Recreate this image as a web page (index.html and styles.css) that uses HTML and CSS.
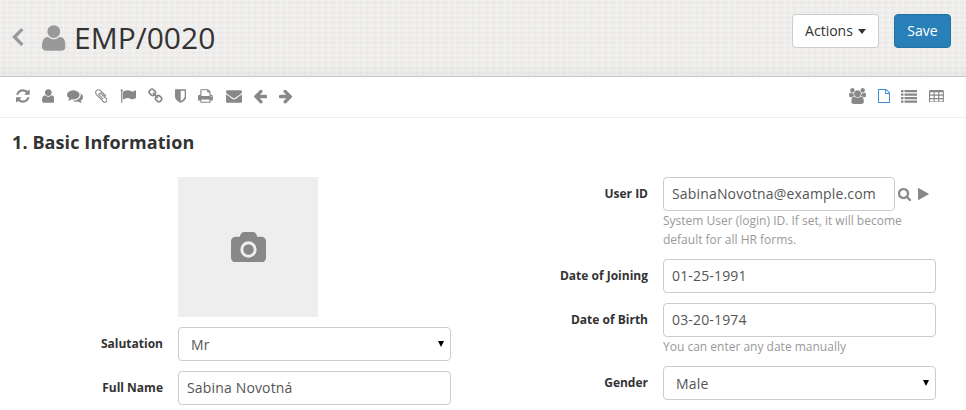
FILE: index.html
```html
<!DOCTYPE html>
<html lang="en">
<head>
<meta charset="utf-8">
<title>EMP/0020</title>
<link rel="stylesheet" href="styles.css">
</head>
<body>
<svg class="defs" width="0" height="0">
  <symbol id="user" viewBox="0 0 1408 1792"><path transform="matrix(1 0 0 -1 0 1536)" d="M1408 131q0 -120 -73 -189.500t-194 -69.500h-874q-121 0 -194 69.500t-73 189.500q0 53 3.500 103.500t14 109t26.500 108.500t43 97.500t62 81t85.500 53.500t111.500 20q9 0 42 -21.500t74.500 -48t108 -48t133.500 -21.500t133.500 21.500t108 48t74.500 48t42 21.500q61 0 111.500 -20t85.500 -53.500t62 -81t43 -97.500t26.500 -108.500t14 -109t3.500 -103.500zM1088 1024q0 -159 -112.500 -271.500t-271.500 -112.500t-271.500 112.500t-112.500 271.500t112.500 271.500t271.500 112.500t271.500 -112.500t112.500 -271.500z"/></symbol>
</svg>
<header class="head">
  <svg class="back" viewBox="0 0 12 18"><path d="M10.300 1.200 2.500 9l7.800 7.800"/></svg>
  <svg class="head-user"><use href="#user"/></svg>
  <h1>EMP/0020</h1>
  <button class="btn">Actions<i class="caret"></i></button>
  <button class="btn primary">Save</button>
</header>
<nav class="toolbar">
  <div class="group">
    <svg width="13.700" height="16" viewBox="128 0 1536 1792"><path d="M1639 1056q0 5-1 7-64 268-268 434.500t-478 166.500q-146 0-282.500-55t-243.500-157l-129 129q-19 19-45 19t-45-19-19-45v-448q0-26 19-45t45-19h448q26 0 45 19t19 45-19 45l-137 137q71 66 161 102t187 36q134 0 250-65t186-179q11-17 53-117 8-23 30-23h192q13 0 22.500 9.500t9.500 22.500zm25-800v448q0 26-19 45t-45 19h-448q-26 0-45-19t-19-45 19-45l138-138q-148-137-349-137-134 0-250 65t-186 179q-11 17-53 117-8 23-30 23h-199q-13 0-22.500-9.500t-9.500-22.500v-7q65-268 270-434.500t480-166.500q146 0 284 55.500t245 156.500l130-129q19-19 45-19t45 19 19 45z"/></svg>
    <svg width="12.600" height="16"><use href="#user"/></svg>
    <svg width="16" height="16" viewBox="0 0 1792 1792"><path d="M1408 768q0 139-94 257t-256.500 186.500-353.500 68.500q-86 0-176-16-124 88-278 128-36 9-86 16h-3q-11 0-20.500-8t-11.500-21q-1-3-1-6.500t.5-6.500 2-6l2.500-5 3.500-5.500 4-5 4.500-5 4-4.500q5-6 23-25t26-29.500 22.500-29 25-38.500 20.500-44q-124-72-195-177t-71-224q0-139 94-257t256.500-186.500 353.500-68.500 353.500 68.500 256.500 186.500 94 257zm384 256q0 120-71 224.500t-195 176.500q10 24 20.500 44t25 38.500 22.500 29 26 29.500 23 25q1 1 4 4.500t4.500 5 4 5 3.500 5.500l2.500 5 2 6 .5 6.500-1 6.500q-3 14-13 22t-22 7q-50-7-86-16-154-40-278-128-90 16-176 16-271 0-472-132 58 4 88 4 161 0 309-45t264-129q125-92 192-212t67-254q0-77-23-152 129 71 204 178t75 230z"/></svg>
    <svg width="12.600" height="16" viewBox="192 0 1408 1792"><path d="M1596 1385q0 117-79 196t-196 79q-135 0-235-100l-777-776q-113-115-113-271 0-159 110-270t269-111q158 0 273 113l605 606q10 10 10 22 0 16-30.500 46.500t-46.500 30.500q-13 0-23-10l-606-607q-79-77-181-77-106 0-179 75t-73 181q0 105 76 181l776 777q63 63 145 63 64 0 106-42t42-106q0-82-63-145l-581-581q-26-24-60-24-29 0-48 19t-19 48q0 32 25 59l410 410q10 10 10 22 0 16-31 47t-47 31q-12 0-22-10l-410-410q-63-61-63-149 0-82 57-139t139-57q88 0 149 63l581 581q100 98 100 235z"/></svg>
    <svg width="16" height="16" viewBox="0 0 1792 1792"><path d="M320 256q0 72-64 110v1266q0 13-9.500 22.500t-22.500 9.500h-64q-13 0-22.500-9.500t-9.500-22.500v-1266q-64-38-64-110 0-53 37.500-90.500t90.500-37.500 90.500 37.500 37.500 90.500zm1472 64v763q0 25-12.500 38.500t-39.500 27.500q-215 116-369 116-61 0-123.500-22t-108.500-48-115.500-48-142.500-22q-192 0-464 146-17 9-33 9-26 0-45-19t-19-45v-742q0-32 31-55 21-14 79-43 236-120 421-120 107 0 200 29t219 88q38 19 88 19 54 0 117.500-21t110-47 88-47 54.500-21q26 0 45 19t19 45z"/></svg>
    <svg width="14.900" height="16" viewBox="64 0 1664 1792"><path d="M1520 1216q0-40-28-68l-208-208q-28-28-68-28-42 0-72 32 3 3 19 18.500t21.500 21.500 15 19 13 25.500 3.500 27.500q0 40-28 68t-68 28q-15 0-27.500-3.500t-25.500-13-19-15-21.500-21.500-18.500-19q-33 31-33 73 0 40 28 68l206 207q27 27 68 27 40 0 68-26l147-146q28-28 28-67zm-703-705q0-40-28-68l-206-207q-28-28-68-28-39 0-68 27l-147 146q-28 28-28 67 0 40 28 68l208 208q27 27 68 27 42 0 72-31-3-3-19-18.500t-21.500-21.500-15-19-13-25.500-3.500-27.500q0-40 28-68t68-28q15 0 27.500 3.500t25.500 13 19 15 21.500 21.500 18.500 19q33-31 33-73zm895 705q0 120-85 203l-147 146q-83 83-203 83-121 0-204-85l-206-207q-83-83-83-203 0-123 88-209l-88-88q-86 88-208 88-120 0-204-84l-208-208q-84-84-84-204t85-203l147-146q83-83 203-83 121 0 204 85l206 207q83 83 83 203 0 123-88 209l88 88q86-88 208-88 120 0 204 84l208 208q84 84 84 204z"/></svg>
    <svg width="11.400" height="16" viewBox="256 0 1280 1792"><path d="M1344 960v-640h-448v1137q119-63 213-137 235-184 235-360zm192-768v768q0 86-33.500 170.500t-83 150-118 127.500-126.500 103-121 77.500-89.500 49.500-42.500 20q-12 6-26 6t-26-6q-16-7-42.500-20t-89.500-49.500-121-77.500-126.500-103-118-127.500-83-150-33.500-170.500v-768q0-26 19-45t45-19h1152q26 0 45 19t19 45z"/></svg>
    <svg width="14.900" height="16" viewBox="64 0 1664 1792"><path d="M448 1536h896v-256h-896v256zm0-640h896v-384h-160q-40 0-68-28t-28-68v-160h-640v640zm1152 64q0-26-19-45t-45-19-45 19-19 45 19 45 45 19 45-19 19-45zm128 0v416q0 13-9.500 22.500t-22.500 9.500h-224v160q0 40-28 68t-68 28h-960q-40 0-68-28t-28-68v-160h-224q-13 0-22.500-9.500t-9.500-22.500v-416q0-79 56.500-135.500t135.500-56.500h64v-544q0-40 28-68t68-28h672q40 0 88 20t76 48l152 152q28 28 48 76t20 88v256h64q79 0 135.500 56.500t56.500 135.500z"/></svg>
    <svg width="16" height="16" viewBox="0 0 1792 1792"><path d="M1792 710v794q0 66-47 113t-113 47h-1472q-66 0-113-47t-47-113v-794q44 49 101 87 362 246 497 345 57 42 92.500 65.500t94.500 48 110 24.500h2q51 0 110-24.500t94.500-48 92.500-65.500q170-123 498-345 57-39 100-87zm0-294q0 79-49 151t-122 123q-376 261-468 325-10 7-42.500 30.500t-54 38-52 32.500-57.500 27-50 9h-2q-23 0-50-9t-57.500-27-52-32.500-54-38-42.500-30.500q-91-64-262-182.500t-205-142.500q-62-42-117-115.500t-55-136.500q0-78 41.500-130t118.500-52h1472q65 0 112.500 47t47.500 113z"/></svg>
    <svg width="13.100" height="16" viewBox="192 0 1472 1792"><path d="M1664 896v128q0 53-32.500 90.500t-84.500 37.500h-704l293 294q38 36 38 90t-38 90l-75 76q-37 37-90 37-52 0-91-37l-651-652q-37-37-37-90 0-52 37-91l651-650q38-38 91-38 52 0 90 38l75 74q38 38 38 91t-38 91l-293 293h704q52 0 84.500 37.500t32.500 90.500z"/></svg>
    <svg width="13.100" height="16" viewBox="128 0 1472 1792"><path d="M1600 960q0 54-37 91l-651 651q-39 37-91 37-51 0-90-37l-75-75q-38-38-38-91t38-91l293-293h-704q-52 0-84.500-37.500t-32.500-90.500v-128q0-53 32.500-90.500t84.500-37.500h704l-293-294q-38-36-38-90t38-90l75-75q38-38 90-38 53 0 91 38l651 651q37 35 37 90z"/></svg>
  </div>
  <div class="group views">
    <svg width="17.100" height="16" viewBox="64 0 1920 1792"><path d="M657 896q-162 5-265 128h-134q-82 0-138-40.500t-56-118.500q0-353 124-353 6 0 43.500 21t97.500 42.500 119 21.500q67 0 133-23-5 37-5 66 0 139 81 256zm1071 637q0 120-73 189.500t-194 69.500h-874q-121 0-194-69.500t-73-189.500q0-53 3.500-103.500t14-109 26.500-108.500 43-97.500 62-81 85.500-53.500 111.500-20q10 0 43 21.500t73 48 107 48 135 21.500 135-21.500 107-48 73-48 43-21.500q61 0 111.500 20t85.500 53.500 62 81 43 97.500 26.500 108.500 14 109 3.500 103.500zm-1024-1277q0 106-75 181t-181 75-181-75-75-181 75-181 181-75 181 75 75 181zm704 384q0 159-112.500 271.500t-271.500 112.500-271.500-112.500-112.500-271.500 112.500-271.500 271.500-112.500 271.500 112.500 112.500 271.500zm576 225q0 78-56 118.500t-138 40.500h-134q-103-123-265-128 81-117 81-256 0-29-5-66 66 23 133 23 59 0 119-21.500t97.500-42.500 43.500-21q124 0 124 353zm-128-609q0 106-75 181t-181 75-181-75-75-181 75-181 181-75 181 75 75 181z"/></svg>
    <svg class="current" width="12" height="14" viewBox="128 0 1536 1792"><path d="M1596 380q28 28 48 76t20 88v1152q0 40-28 68t-68 28h-1344q-40 0-68-28t-28-68v-1600q0-40 28-68t68-28h896q40 0 88 20t76 48zm-444-244v376h376q-10-29-22-41l-313-313q-12-12-41-22zm384 1528v-1024h-416q-40 0-68-28t-28-68v-416h-768v1536h1280z"/></svg>
    <svg width="16" height="13" viewBox="0 0 16 13"><path d="M0 0h2.500v2.200H0zM3.500 0H16v2.200H3.500zM0 3.500h2.500v2.200H0zM3.500 3.500H16v2.200H3.500zM0 7h2.500v2.200H0zM3.500 7H16v2.200H3.500zM0 10.500h2.500v2.200H0zM3.500 10.500H16v2.200H3.500z"/></svg>
    <svg width="14.900" height="12.600" viewBox="64 128 1664 1408"><path fill-rule="evenodd" d="M224 128h1344q160 0 160 160v1088q0 160-160 160H224q-160 0-160-160V288q0-160 160-160zM192 384v256h384V384zm512 0v256h384V384zm512 0v256h384V384zM192 768v256h384V768zm512 0v256h384V768zm512 0v256h384V768zM192 1152v256h384v-256zm512 0v256h384v-256zm512 0v256h384v-256z"/></svg>
  </div>
</nav>
<main>
  <h2>1. Basic Information</h2>
  <form class="form">
    <div class="col">
      <div class="photo"><svg width="35" height="30.300" viewBox="0 128 1920 1664"><path transform="translate(0 128)" d="M960 672q119 0 203.500 84.500t84.500 203.500-84.500 203.500-203.500 84.500-203.500-84.500-84.500-203.500 84.500-203.500 203.500-84.500zm704-416q106 0 181 75t75 181v896q0 106-75 181t-181 75h-1408q-106 0-181-75t-75-181v-896q0-106 75-181t181-75h224l51-136q19-49 69.500-84.500t103.500-35.500h512q53 0 103.500 35.500t69.500 84.500l51 136h224zm-704 1152q185 0 316.500-131.500t131.500-316.500-131.500-316.500-316.500-131.500-316.500 131.500-131.500 316.500 131.500 316.500 316.500 131.500z"/></svg></div>
      <div class="row"><label>Salutation</label><div class="field select"><span>Mr</span><i class="arrow"></i></div></div>
      <div class="row"><label>Full Name</label><div class="field">Sabina Novotná</div></div>
    </div>
    <div class="col">
      <div class="row"><label>User ID</label>
        <div class="control">
          <div class="link-field">
            <div class="field">SabinaNovotna@example.com</div>
            <svg class="search" width="13" height="13" viewBox="64 128 1664 1664"><path d="M1216 832q0-185-131.500-316.500t-316.500-131.500-316.500 131.500-131.500 316.500 131.500 316.500 316.500 131.500 316.500-131.500 131.500-316.500zm512 832q0 52-38 90t-90 38q-54 0-90-38l-343-342q-179 124-399 124-143 0-273.500-55.500t-225-150-150-225-55.500-273.500 55.500-273.500 150-225 225-150 273.500-55.500 273.500 55.500 225 150 150 225 55.500 273.500q0 220-124 399l343 343q37 37 37 90z"/></svg>
            <svg class="open" width="11" height="12" viewBox="0 0 11 12"><path d="M0 .3Q0-.2.500.1L10.700 5.700Q11 6 10.700 6.300L.5 11.900Q0 12.200 0 11.700z"/></svg>
          </div>
          <p class="help">System User (login) ID. If set, it will become default for all HR forms.</p>
        </div>
      </div>
      <div class="row"><label>Date of Joining</label><div class="field">01-25-1991</div></div>
      <div class="row"><label>Date of Birth</label>
        <div class="control"><div class="field">03-20-1974</div><p class="help">You can enter any date manually</p></div>
      </div>
      <div class="row"><label>Gender</label><div class="field select"><span>Male</span><i class="arrow"></i></div></div>
    </div>
  </form>
</main>
</body>
</html>
```
FILE: styles.css
```css
* { box-sizing: border-box; }
html, body { height: 410px; overflow: hidden; }
body {
  margin: 0;
  background: #fff;
  color: #333;
  font: 14px/20px "Open Sans", "Noto Sans", sans-serif;
}
h1, h2, p { margin: 0; }
svg { display: block; flex: none; fill: #888; }
.defs { position: absolute; }

.head {
  display: flex;
  align-items: flex-start;
  height: 77px;
  padding: 0 15px 0 12px;
  border-bottom: 1px solid #c7c7c7;
  background:
    linear-gradient(to bottom, rgba(0,0,0,0) 85%, rgba(0,0,0,.03)),
    repeating-linear-gradient(90deg, rgba(255,255,255,.22) 0 1px, transparent 1px 3px, rgba(0,0,0,.012) 3px 4px, transparent 4px 7px),
    repeating-linear-gradient(0deg, rgba(255,255,255,.22) 0 1px, transparent 1px 3px, rgba(0,0,0,.012) 3px 4px, transparent 4px 5px),
    #eeedec;
}
.back { width: 12px; height: 18px; margin-top: 28px; fill: none; stroke: #999; stroke-width: 3.300; }
.head-user { width: 23.600px; height: 30px; margin: 23px 8.400px 0 18px; fill: #999; }
h1 { flex: 1; margin-top: 18px; font-size: 30px; line-height: 40px; font-weight: 400; }
.btn {
  display: flex;
  align-items: center;
  justify-content: center;
  width: 87px;
  height: 34px;
  margin-top: 14px;
  padding: 0;
  border: 1px solid #ccc;
  border-radius: 4px;
  background: #fff;
  color: #333;
  font: inherit;
}
.btn.primary { width: 57px; margin-left: 15px; border-color: #2472a4; background: #2980b9; color: #fff; }
.caret { margin-left: 5px; border: 4px solid transparent; border-top: 5px solid #333; border-bottom: 0; }

.toolbar {
  display: flex;
  justify-content: space-between;
  height: 41px;
  padding: 0 22px 0 16px;
  border-bottom: 1px solid #eee;
}
.group { display: flex; align-items: center; gap: 12.200px; height: 38px; }
.views { gap: 11.700px; }
.views .current { fill: #3b8dd6; }

h2 { padding: 12px 12px 0; font-size: 18px; line-height: 25px; font-weight: 700; letter-spacing: .1px; }
.form { display: flex; margin-top: 22px; }
.col { display: flex; flex-direction: column; gap: 10px; width: 485px; flex: none; }
.row { display: flex; align-items: flex-start; }
label { width: 163px; margin-right: 15px; padding-top: 7px; text-align: right; font-size: 12px; font-weight: 700; line-height: 20px; }
.control { width: 273px; }
.field {
  width: 273px;
  height: 34px;
  padding: 6px 8px;
  border: 1px solid #ccc;
  border-radius: 4px;
  color: #555;
  letter-spacing: .16px;
}
.select { display: flex; align-items: flex-start; justify-content: space-between; padding: 7px 6px 0 12px; }
.arrow { margin-top: 6px; border: 3.500px solid transparent; border-top: 6px solid #000; border-bottom: 0; }
.link-field { display: flex; align-items: center; }
.link-field .field { width: 232px; }
.search { margin-left: 3px; stroke: #888; stroke-width: 40; }
.open { margin-left: 7px; }
.help { width: 260px; color: #999; font-size: 12px; line-height: 19px; }
.photo { display: flex; align-items: center; justify-content: center; width: 140px; height: 140px; margin-left: 178px; background: #eee; }
```
